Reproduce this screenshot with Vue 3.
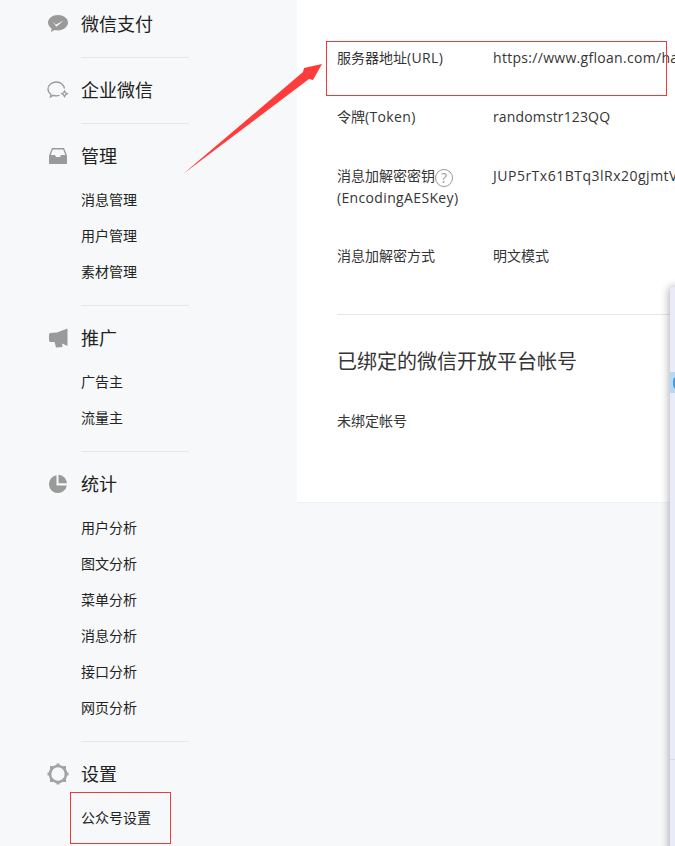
<script setup>
const groups = [
  { title: '微信支付', icon: 'pay', items: [] },
  { title: '企业微信', icon: 'work', items: [] },
  { title: '管理', icon: 'inbox', items: ['消息管理', '用户管理', '素材管理'] },
  { title: '推广', icon: 'horn', items: ['广告主', '流量主'] },
  { title: '统计', icon: 'pie', items: ['用户分析', '图文分析', '菜单分析', '消息分析', '接口分析', '网页分析'] },
  { title: '设置', icon: 'gear', items: ['公众号设置'] }
]
</script>

<template>
  <div class="page">
    <aside class="side">
      <section v-for="g in groups" :key="g.title" class="group">
        <h3 class="head">
          <span class="ico">
            <svg v-if="g.icon === 'pay'" width="22" height="20" viewBox="0 0 22 20">
              <path d="M11 1C5.500 1 1 4.400 1 8.600c0 2.400 1.400 4.500 3.600 5.900L4 18l3.600-2.100c1.100.3 2.200.5 3.400.5 5.500 0 10-3.500 10-7.800S16.500 1 11 1z" fill="#9a9a9a"/>
              <path d="M5.800 7.800l3 2.900 7.800-4.300-7.300 6.400z" fill="#fff"/>
            </svg>
            <svg v-else-if="g.icon === 'work'" width="24" height="20" viewBox="0 0 24 20" fill="none" stroke="#9a9a9a" stroke-width="1.300">
              <path d="M18.500 8.500C18 5 14.800 2 10.500 2 5.800 2 2 5.200 2 9c0 2.100 1.200 4 3 5.200l-.5 2.800 2.800-1.700c1 .3 2.100.5 3.200.5 1 0 2-.2 3-.4"/>
              <path d="M18.500 11l1 1.800 1.800 1-1.800 1-1 1.800-1-1.800-1.800-1 1.800-1z"/>
            </svg>
            <svg v-else-if="g.icon === 'inbox'" width="20" height="18" viewBox="0 0 20 18">
              <path d="M4 1h12l3 7.500V17H1V8.500z" fill="#9a9a9a"/>
              <path d="M4.800 2.500h10.400L17.300 8H13l-1 2H8L7 8H2.700z" fill="#f6f8f9"/>
            </svg>
            <svg v-else-if="g.icon === 'horn'" width="22" height="20" viewBox="0 0 22 20">
              <path d="M20.500 .5V18L15 15.500 15.500 19 9 19.500 7.500 14H3L2 12.500v-6L3 5l7-.5z" fill="#9a9a9a"/>
            </svg>
            <svg v-else-if="g.icon === 'pie'" width="20" height="20" viewBox="0 0 20 20">
              <path d="M8.500 1.200A9 9 0 1 0 18.800 11.500H8.500z" fill="#9a9a9a"/>
              <path d="M10.500 .8A9 9 0 0 1 19 9.300h-8.500z" fill="#9a9a9a"/>
            </svg>
            <svg v-else width="23" height="23" viewBox="0 0 23 23">
              <circle cx="11" cy="11" r="8" fill="none" stroke="#a3a3a3" stroke-width="2.600"/>
              <g fill="#a3a3a3">
                <rect x="9.500" y=".5" width="3" height="3"/>
                <rect x="9.500" y="18.500" width="3" height="3"/>
                <rect x=".5" y="9.500" width="3" height="3"/>
                <rect x="18.500" y="9.500" width="3" height="3"/>
                <rect x="3" y="3" width="3" height="3"/>
                <rect x="16" y="3" width="3" height="3"/>
                <rect x="3" y="16" width="3" height="3"/>
                <rect x="16" y="16" width="3" height="3"/>
              </g>
            </svg>
          </span>
          {{ g.title }}
        </h3>
        <ul v-if="g.items.length" class="subs">
          <li v-for="i in g.items" :key="i">{{ i }}</li>
        </ul>
      </section>
    </aside>

    <main class="main">
      <dl class="rows">
        <div class="row"><dt>服务器地址<span class="lat">(URL)</span></dt><dd class="v-url">https://www.gfloan.com/handler/wechat/callback</dd></div>
        <div class="row"><dt>令牌<span class="lat">(Token)</span></dt><dd class="v-token">randomstr123QQ</dd></div>
        <div class="row row-tall">
          <dt>消息加解密密钥<span class="help">?</span><br><span class="lat">(EncodingAESKey)</span></dt>
          <dd class="v-key">JUP5rTx61BTq3lRx20gjmtV9kLmQwZsYp8aHcNe4Ufo</dd>
        </div>
        <div class="row"><dt>消息加解密方式</dt><dd>明文模式</dd></div>
      </dl>
      <hr class="rule">
      <h2 class="title">已绑定的微信开放平台帐号</h2>
      <p class="none">未绑定帐号</p>
    </main>

    <div class="dialog">
      <div class="band"><i></i></div>
      <div class="dialog-line"></div>
    </div>

    <div class="mark mark-url"></div>
    <div class="mark mark-set"></div>
    <svg class="arrow" width="160" height="130" viewBox="0 0 160 130">
      <polygon points="3,120 123,18 124,14 142,10 133,26 129,25" fill="#ff3b3b"/>
    </svg>
  </div>
</template>

<style>
html, body { margin: 0; background: #f6f8f9; overflow: hidden; }
</style>

<style scoped>
.page {
  position: relative;
  display: flex;
  align-items: flex-start;
  width: 675px;
  height: 846px;
  overflow: hidden;
  background: #f6f8f9;
  color: #353535;
  font-family: "Open Sans", "Noto Sans CJK SC", sans-serif;
}
.side { flex: 0 0 297px; padding-left: 81px; box-sizing: border-box; }
.group { width: 108px; padding: 10px 0 11px; border-top: 1px solid #e7e7eb; }
.group:first-child { padding-top: 2px; border-top: 0; }
.head {
  position: relative;
  margin: 0;
  font-size: 18px;
  font-weight: 400;
  line-height: 44px;
  color: #222;
}
.ico {
  position: absolute;
  left: -45px;
  top: 0;
  width: 44px;
  height: 44px;
  display: flex;
  align-items: center;
  justify-content: center;
}
.ico svg { display: block; }
.subs { list-style: none; margin: 0; padding: 4px 0; }
.subs li { font-size: 14px; line-height: 36px; color: #222; }
.main {
  flex: 1;
  min-width: 0;
  height: 503px;
  box-sizing: border-box;
  padding: 47px 0 0 40px;
  background: #fff;
  border-bottom: 1px solid #eef0f2;
}
.rows { margin: 0; }
.row { display: flex; margin-bottom: 37px; font-size: 14px; line-height: 22px; }
.row-tall { margin-bottom: 36px; }
.row dt { flex: 0 0 156px; color: #353535; white-space: nowrap; }
.row dd { margin: 0; white-space: nowrap; color: #353535; }
.lat { letter-spacing: .35px; }
.v-url { letter-spacing: .3px; }
.v-token { letter-spacing: .14px; }
.v-key { letter-spacing: .5px; }
.help {
  display: inline-block;
  box-sizing: border-box;
  width: 18px;
  height: 18px;
  border: 1px solid #9a9a9a;
  border-radius: 50%;
  font-size: 14px;
  line-height: 16px;
  text-align: center;
  color: #9a9a9a;
  vertical-align: -2px;
}
.rule { margin: 47px 0 0; border: 0; border-top: 1px solid #e7e7eb; }
.title { margin: 32px 0 0; font-size: 20px; line-height: 30px; font-weight: 400; color: #353535; }
.none { margin: 33px 0 0; font-size: 14px; line-height: 22px; }
.dialog {
  position: absolute;
  left: 670px;
  top: 287px;
  width: 40px;
  height: 600px;
  background: #e9ebf8;
  border-radius: 3px 0 0 0;
  box-shadow: -1px 0 8px rgba(0, 0, 0, .32);
}
.band {
  position: absolute;
  left: 0;
  right: 0;
  top: 85px;
  height: 21px;
  background: #b5d8f5;
}
.band i {
  position: absolute;
  left: 3px;
  top: 5px;
  width: 8px;
  height: 12px;
  border-radius: 4px;
  background: #4c9be0;
}
.dialog-line {
  position: absolute;
  left: 0;
  right: 0;
  top: 472px;
  height: 1px;
  background: #d8dae6;
}
.mark { position: absolute; border: 1px solid #f03a3a; box-sizing: border-box; }
.mark-url { left: 326px; top: 41px; width: 341px; height: 55px; }
.mark-set { left: 70px; top: 792px; width: 101px; height: 52px; }
.arrow { position: absolute; left: 180px; top: 54px; }
</style>
